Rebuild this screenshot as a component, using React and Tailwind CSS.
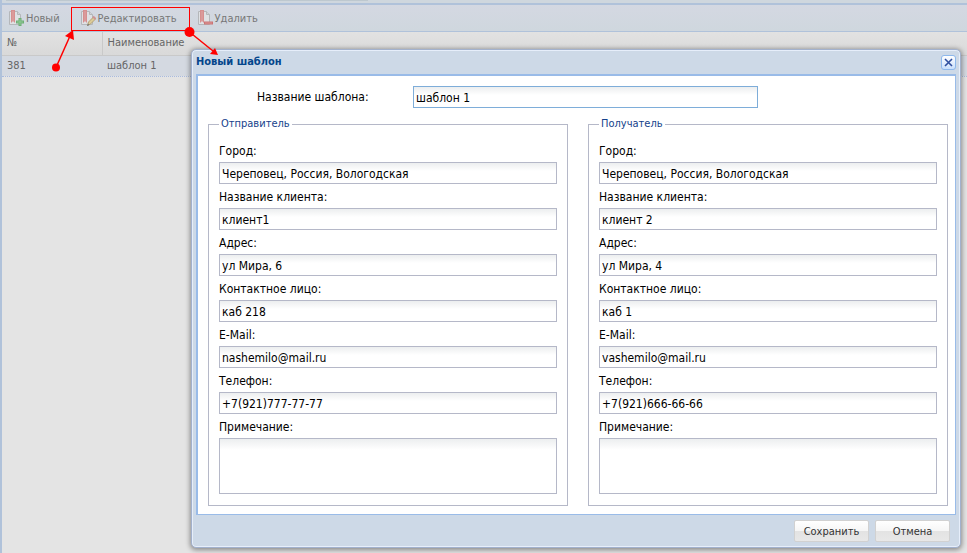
import React from "react";

const senderFields = [
  { label: "Город:", value: "Череповец, Россия, Вологодская" },
  { label: "Название клиента:", value: "клиент1" },
  { label: "Адрес:", value: "ул Мира, 6" },
  { label: "Контактное лицо:", value: "каб 218" },
  { label: "E-Mail:", value: "nashemilo@mail.ru" },
  { label: "Телефон:", value: "+7(921)777-77-77" },
];

const recipientFields = [
  { label: "Город:", value: "Череповец, Россия, Вологодская" },
  { label: "Название клиента:", value: "клиент 2" },
  { label: "Адрес:", value: "ул Мира, 4" },
  { label: "Контактное лицо:", value: "каб 1" },
  { label: "E-Mail:", value: "vashemilo@mail.ru" },
  { label: "Телефон:", value: "+7(921)666-66-66" },
];

function BookmarkIcon({ kind }) {
  return (
    <svg width="16" height="16" viewBox="0 0 16 16" fill="none" className="shrink-0" aria-hidden="true">
      <path d="M1.500 1.500h8l3 3v10h-11z" fill="#dfe1e4" stroke="#b4b7ba" />
      <path d="M9.500 1.500v3h3" fill="#cfd2d5" stroke="#b4b7ba" />
      <path d="M3 0h4v13l-2-2-2 2z" fill="#d68f8f" />
      <path d="M5 1v10" stroke="#dfa5a5" />
      {kind === "add" && (
        <>
          <path d="M12 8v8M8 12h8" stroke="#6fae76" strokeWidth="3" />
          <path d="M12 9v6M9 12h6" stroke="#8ecb94" />
        </>
      )}
      {kind === "edit" && (
        <>
          <path d="M7.500 15.500l1-3.500 5-5 2 2-5 5z" fill="#dccb96" stroke="#b3a27a" />
          <path d="M13 6.500l2.500 2.500" stroke="#cf9494" strokeWidth="2" />
          <path d="M7 16l1-2.500 1.500 1.500z" fill="#777" />
        </>
      )}
      {kind === "remove" && (
        <>
          <path d="M7 13h9" stroke="#cb7474" strokeWidth="3" />
          <path d="M8 13h7" stroke="#dc9696" />
        </>
      )}
    </svg>
  );
}

function ToolButton({ kind, children }) {
  return (
    <button type="button" className="flex h-6 items-center gap-[2px] text-[11px] text-[#777]">
      <BookmarkIcon kind={kind} />
      <span className="pt-[2px]">{children}</span>
    </button>
  );
}

function PartyFieldset({ id, title, fields }) {
  return (
    <fieldset className="min-w-0 flex-1 border border-[#b5b8c8] px-[10px] pt-[7px] pb-[11px]">
      <legend className="px-[2px] text-[11px] leading-[14px] text-[#15428b]">{title}</legend>
      {fields.map((f, i) => (
        <div key={f.label}>
          <label htmlFor={id + i} className="block h-6 pt-px leading-6">
            {f.label}
          </label>
          <input
            id={id + i}
            type="text"
            defaultValue={f.value}
            className="block h-[22px] w-full border border-[#b5b8c8] bg-linear-to-b from-[#eceeef] to-white to-40% px-[2px] pt-px"
          />
        </div>
      ))}
      <label htmlFor={id + "note"} className="block h-6 pt-px leading-6">
        Примечание:
      </label>
      <textarea
        id={id + "note"}
        className="block h-14 w-full resize-none border border-[#b5b8c8] bg-linear-to-b from-[#eceeef] to-white to-20% px-[2px]"
      />
    </fieldset>
  );
}

function DialogButton({ children }) {
  return (
    <button
      type="button"
      className="h-[22px] w-[75px] rounded-[2px] border border-[#d1d1d1] bg-[linear-gradient(#ffffff,#f6f6f6_48%,#e3e3e3_52%,#e8e8e8)] pt-[2px] text-[11px] text-[#333]"
    >
      {children}
    </button>
  );
}

function TemplateDialog() {
  return (
    <div
      role="dialog"
      aria-labelledby="dialog-title"
      className="absolute top-[49px] right-[6px] left-[189px] rounded-[5px] border border-[#a2b1cd] bg-[#cdd9e7] px-1 shadow-[inset_0_0_0_1px_#e6eefa,0_1px_5px_1px_rgba(0,0,0,0.4)]"
    >
      <div className="flex h-6 items-center justify-between">
        <h1 id="dialog-title" className="pt-px text-[11px] font-bold text-[#04468c]">
          Новый шаблон
        </h1>
        <button
          type="button"
          aria-label="Закрыть"
          className="flex size-[15px] items-center justify-center rounded-[3px] border border-[#8db8ec] bg-linear-to-b from-white to-[#c9dffb]"
        >
          <svg width="9" height="9" viewBox="0 0 9 9" aria-hidden="true">
            <path d="M1 1l7 7M8 1l-7 7" stroke="#2f4f9f" strokeWidth="1.600" />
          </svg>
        </button>
      </div>
      <form className="border border-t-2 border-l-2 border-[#99bbe8] bg-white pt-[10px] pr-[7px] pb-2 pl-[10px]">
        <div className="flex h-[22px] items-center pl-[49px]">
          <label htmlFor="template-name" className="w-[156px]">
            Название шаблона:
          </label>
          <input
            id="template-name"
            type="text"
            defaultValue="шаблон 1"
            className="h-[22px] w-[345px] border border-[#7eadd9] bg-linear-to-b from-[#eceeef] to-white to-40% px-[2px] pt-px"
          />
        </div>
        <div className="mt-[9px] flex gap-5">
          <PartyFieldset id="sender" title="Отправитель" fields={senderFields} />
          <PartyFieldset id="recipient" title="Получатель" fields={recipientFields} />
        </div>
      </form>
      <div className="flex h-8 items-center justify-end gap-[6px] pr-[6px]">
        <DialogButton>Сохранить</DialogButton>
        <DialogButton>Отмена</DialogButton>
      </div>
    </div>
  );
}

function Annotations() {
  return (
    <svg
      width="240"
      height="80"
      viewBox="0 0 240 80"
      className="pointer-events-none absolute top-0 -left-[2px]"
      aria-hidden="true"
    >
      <rect x="71.500" y="7.500" width="118" height="23" fill="none" stroke="#f00" />
      <circle cx="56" cy="67.500" r="4" fill="#f00" />
      <path d="M56 67.500L70 36" stroke="#f00" strokeWidth="1.500" />
      <path d="M73 30l1 10-9-4z" fill="#f00" />
      <circle cx="189.500" cy="32" r="5" fill="#f00" />
      <path d="M189.500 32L213 51" stroke="#f00" strokeWidth="1.500" />
      <path d="M218 55l-8-1 5-6z" fill="#f00" />
    </svg>
  );
}

export default function App() {
  return (
    <div className="relative min-h-screen border-l-2 border-[#b0c2da] bg-[#e4e4e4] font-['DejaVu_Sans_Condensed','DejaVu_Sans',sans-serif] text-[12px] text-black">
      <div className="h-[3px] bg-[#cfd7de]">
        <div className="ml-1 h-px w-[362px] bg-[#bdc8cf]" />
      </div>
      <div className="flex h-[29px] items-center gap-5 border-t-2 border-b border-t-[#b0c2da] border-b-[#b0c2da] bg-linear-to-b from-[#d4d8e2] to-[#cfd7de] pl-[6px]">
        <ToolButton kind="add">Новый</ToolButton>
        <ToolButton kind="edit">Редактировать</ToolButton>
        <ToolButton kind="remove">Удалить</ToolButton>
      </div>
      <table className="w-full table-fixed border-collapse text-left text-[11px] text-[#666]">
        <thead>
          <tr className="h-[23px] bg-linear-to-b from-[#e2e2e2] to-[#d9d9d9]">
            <th className="w-[100px] border-r border-b border-[#c9c9c9] px-[5px] font-normal">№</th>
            <th className="border-b border-[#c9c9c9] px-[5px] font-normal">Наименование</th>
          </tr>
        </thead>
        <tbody>
          <tr className="h-[21px] border-y border-dotted border-[#a9bbdf] bg-[#d4d9e1]">
            <td className="px-[5px] pt-px">381</td>
            <td className="px-[5px] pt-px">шаблон 1</td>
          </tr>
        </tbody>
      </table>
      <TemplateDialog />
      <Annotations />
    </div>
  );
}
